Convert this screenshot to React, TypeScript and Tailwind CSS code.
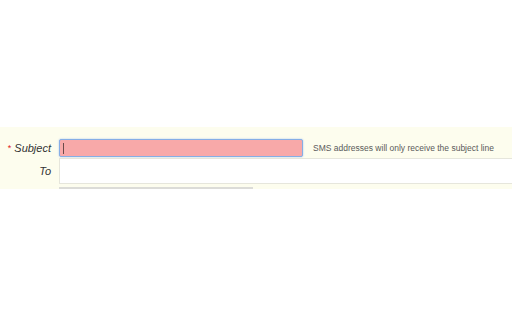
import React from "react";

const App = () => {
  return (
    <div className="h-[320px] w-[512px] overflow-hidden bg-white pt-[127px] font-['Liberation_Sans',Arial,sans-serif]">
      <div className="h-[62px] bg-[#fdfdee]">
        <div className="flex h-[31px] items-start pt-[12px]">
          <label className="w-[59px] pr-[8px] text-right text-[11px] italic leading-[18px] text-[#333]">
            <span className="relative -top-[1px] mr-[3px] text-[9px] not-italic text-[#e02020]">*</span>
            Subject
          </label>
          <div className="flex h-[18px] w-[244px] items-center rounded-[2px] border border-[#86aee6] bg-[#f8a9a9] pl-[3px] shadow-[0_0_2px_#a9c6f0]">
            <span className="h-[11px] w-px bg-[#6b4a4a]" />
          </div>
          <span className="ml-[10px] text-[8.5px] leading-[18px] text-[#5a5a5a]">
            SMS addresses will only receive the subject line
          </span>
        </div>
        <div className="flex h-[26px]">
          <label className="w-[59px] pr-[8px] text-right text-[11px] italic leading-[26px] text-[#333]">
            To
          </label>
          <div className="flex-1 border border-r-0 border-[#e6e6dc] bg-white" />
        </div>
        <div className="flex pt-[3px]">
          <div className="ml-[59px] h-[2px] w-[194px] bg-[#dcdcd8]" />
        </div>
      </div>
    </div>
  );
};

export default App;
